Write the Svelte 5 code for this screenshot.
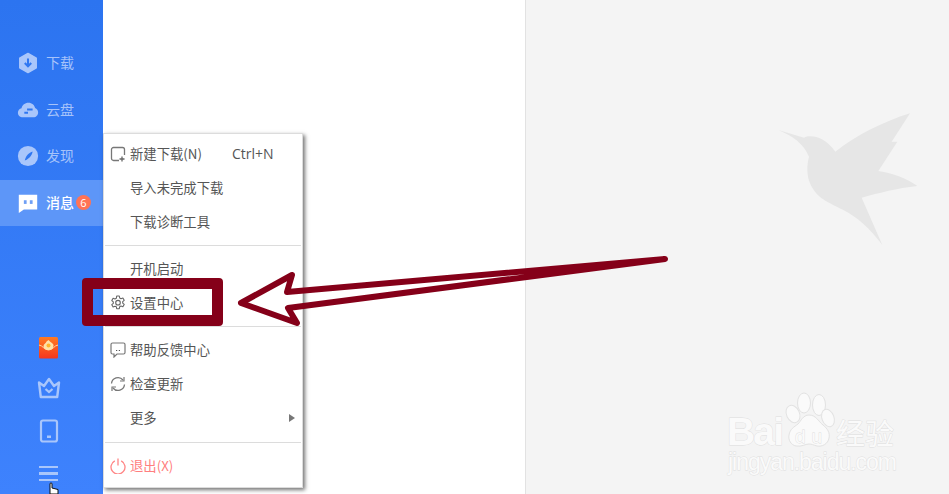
<script>
	const navItems = [
		{ key: 'download', label: '下载' },
		{ key: 'cloud', label: '云盘' },
		{ key: 'discover', label: '发现' },
		{ key: 'message', label: '消息', badge: 6, active: true }
	];

	const menuGroups = [
		[
			{ icon: 'new', label: '新建下载(N)', hint: 'Ctrl+N' },
			{ label: '导入未完成下载' },
			{ label: '下载诊断工具' }
		],
		[{ label: '开机启动' }, { icon: 'gear', label: '设置中心' }],
		[
			{ icon: 'help', label: '帮助反馈中心' },
			{ icon: 'refresh', label: '检查更新' },
			{ label: '更多', more: true }
		],
		[{ icon: 'power', label: '退出(X)', danger: true }]
	];
</script>

<div class="app">
	<aside class="sidebar">
		<nav class="nav">
			{#each navItems as item}
				<div class="nav-item" class:active={item.active}>
					<svg class="nav-icon" viewBox="0 0 24 24" width="24" height="24">
						{#if item.key === 'download'}
							<path d="M12 1.500 21 6.600v10.800l-9 5.100-9-5.100V6.600z" fill="#a9c6fb" stroke="#a9c6fb" stroke-linejoin="round" stroke-width="1.500" />
							<path d="M12 7v8M8.500 12l3.500 3.600 3.500-3.600" fill="none" stroke="#2f77f2" stroke-width="2.200" />
						{:else if item.key === 'cloud'}
							<path d="M6.500 20C3 20 1 17.500 1 15c0-2.500 1.700-4.500 4-5 .8-3.500 3.700-6 7.500-6 3.800 0 6.500 2.500 7.200 5.800 2 .7 3.300 2.700 3.300 5 0 2.800-2.200 5.200-5 5.200z" fill="#a9c6fb" />
							<path d="M11 11.500h6M8 15h4" fill="none" stroke="#2f77f2" stroke-width="2" />
						{:else if item.key === 'discover'}
							<circle cx="12" cy="12" r="11" fill="#a9c6fb" />
							<path d="M17 7c-.5 3.500-2.500 7-8.500 10C9 13.500 11.500 9 17 7z" fill="#2f77f2" />
						{:else}
							<path d="M2 3h20v16H7.500L2 23z" fill="#fff" />
							<rect x="7.500" y="9" width="3" height="4" fill="#6f9ff5" />
							<rect x="14" y="9" width="3" height="4" fill="#6f9ff5" />
						{/if}
					</svg>
					<span class="nav-label">{item.label}</span>
					{#if item.badge}<span class="badge">{item.badge}</span>{/if}
				</div>
			{/each}
		</nav>

		<div class="tools">
			<svg class="packet" viewBox="0 0 20 22" width="20" height="22">
				<defs>
					<linearGradient id="packet" x1="0" y1="0" x2="0" y2="1">
						<stop offset="0" stop-color="#ff7a22" />
						<stop offset="1" stop-color="#f5361f" />
					</linearGradient>
				</defs>
				<rect width="19" height="21.500" rx="1.500" fill="url(#packet)" />
				<path d="M0 8c4 .5 5 5 9.500 5S15 8.500 19 8" fill="none" stroke="#ffd9a0" stroke-width="1" />
				<path d="M4.500 9c0-2 2.500-2.500 3-4.500l2-1.500L11.500 5c1.500 1 3.500 2 3 4-.5 3-2.500 4-5 4s-5-1.500-5-4z" fill="#ffe1a8" />
				<circle cx="9.500" cy="8.500" r="2" fill="#ffb52e" />
			</svg>
			<svg viewBox="0 0 24 22" width="24" height="22">
				<path d="M2 5.500 7 9l5-7 5 7 5-3.500-1.800 14.500H3.800z" fill="none" stroke="#a9c6fb" stroke-width="2.400" stroke-linejoin="round" />
				<path d="M8.500 12l3.500 3 3.500-3" fill="none" stroke="#a9c6fb" stroke-width="2.200" />
			</svg>
			<svg viewBox="0 0 20 24" width="20" height="24">
				<rect x="2" y="1.500" width="16" height="21" rx="2" fill="none" stroke="#a9c6fb" stroke-width="2.200" />
				<rect x="8" y="16.500" width="4" height="2.500" fill="#a9c6fb" />
			</svg>
			<div class="hamburger"><i></i><i></i><i></i></div>
		</div>
	</aside>

	<main class="content"></main>

	<section class="panel">
		<svg class="bird" viewBox="0 0 510 480" width="170" height="160">
			<path d="M55 90 132 113C150 105 190 105 226 155 290 105 370 65 450 40L395 125 412 125 355 213C400 220 440 235 472 258 410 265 360 278 305 293L367 435C330 385 290 350 250 330 200 305 170 295 150 250 140 225 140 195 147 170 130 130 100 110 55 90Z" fill="#e6e6e6" />
		</svg>
		<svg class="mark" viewBox="0 0 229 109" width="229" height="109">
			<g fill="#fafafa" stroke="#e2e2e2" stroke-width="1">
				<ellipse cx="84" cy="18" rx="6.500" ry="10" />
				<ellipse cx="99" cy="20" rx="6.500" ry="10.500" />
				<ellipse cx="73" cy="29" rx="6.500" ry="9" transform="rotate(-25 73 29)" />
				<ellipse cx="108" cy="33" rx="6" ry="9" transform="rotate(-20 108 33)" />
				<path d="M89 30c7 0 9 6 14 10 5 4 7 8 6 13-1 6-7 9-12 8-4-1-5-2-8-2-4 0-7 3-13 2-5-1-8-6-7-11 1-6 5-8 9-11 3-3 5-9 11-9z" />
			</g>
			<g class="mark-text">
				<text x="7" y="60" font-size="39" font-weight="700" textLength="57">Bai</text>
				<text x="75" y="58" font-size="19" textLength="27">du</text>
				<text x="116" y="60" font-size="29" textLength="58">经验</text>
				<text x="8" y="85" font-size="23" textLength="169">jingyan.baidu.com</text>
			</g>
		</svg>
	</section>

	<div class="menu">
		{#each menuGroups as group, g}
			{#if g > 0}<div class="divider"></div>{/if}
			{#each group as item}
				<div class="menu-item" class:danger={item.danger}>
					<span class="menu-icon">
						{#if item.icon === 'new'}
							<svg viewBox="0 0 16 16" width="16" height="16">
								<path d="M9 14.500H3.500a2 2 0 0 1-2-2v-9a2 2 0 0 1 2-2h9a2 2 0 0 1 2 2V9" fill="none" stroke="#777" stroke-width="1.300" />
								<path d="M12 10.500v5M9.500 13h5" fill="none" stroke="#666" stroke-width="1.300" />
							</svg>
						{:else if item.icon === 'gear'}
							<svg viewBox="0 0 16 16" width="16" height="16">
								<path d="M6.700 1h2.600l.4 2 1.300.7 1.900-.7 1.300 2.300-1.500 1.300v1.500l1.500 1.300-1.300 2.300-1.900-.7-1.300.7-.4 2H6.700l-.4-2L5 11.300l-1.900.7-1.300-2.300L3.300 8.400V6.900L1.800 5.600 3.100 3.300l1.900.7 1.300-.7z" fill="none" stroke="#666" stroke-width="1.100" stroke-linejoin="round" />
								<circle cx="8" cy="7.700" r="2.300" fill="none" stroke="#666" stroke-width="1.100" />
							</svg>
						{:else if item.icon === 'help'}
							<svg viewBox="0 0 16 16" width="16" height="16">
								<path d="M2.500 1h11A1.500 1.500 0 0 1 15 2.500v8a1.500 1.500 0 0 1-1.500 1.500H7l-3 3v-3H2.500A1.500 1.500 0 0 1 1 10.500v-8A1.500 1.500 0 0 1 2.500 1z" fill="none" stroke="#777" stroke-width="1.200" />
								<path d="M6 8.500h1.200M8.800 8.500H10" stroke="#555" stroke-width="1.200" />
							</svg>
						{:else if item.icon === 'refresh'}
							<svg viewBox="0 0 16 16" width="16" height="16">
								<path d="M1.500 7.500A6.500 6.500 0 0 1 13 4" fill="none" stroke="#777" stroke-width="1.300" />
								<path d="M14.500 8.500A6.500 6.500 0 0 1 3 12" fill="none" stroke="#777" stroke-width="1.300" />
								<path d="M14 1v4h-4M2 15v-4h4" fill="none" stroke="#777" stroke-width="1.200" />
							</svg>
						{:else if item.icon === 'power'}
							<svg viewBox="0 0 16 16" width="16" height="16">
								<path d="M4.800 2.800a7 7 0 1 0 6.400 0" fill="none" stroke="#ff8585" stroke-width="1.300" />
								<path d="M8 .5v7" stroke="#ff8585" stroke-width="1.300" />
							</svg>
						{/if}
					</span>
					<span class="menu-label">{item.label}</span>
					{#if item.hint}<span class="menu-hint">{item.hint}</span>{/if}
					{#if item.more}<span class="caret"></span>{/if}
				</div>
			{/each}
		{/each}
	</div>

	<!-- hand annotation drawn over the screenshot -->
	<div class="highlight"></div>
	<svg class="arrow" viewBox="0 0 949 494" width="949" height="494">
		<path d="M665 259 287 292 292 275 241 303 297 323 288 308Z" fill="none" stroke="#850019" stroke-width="6" stroke-linejoin="round" />
	</svg>
	<svg class="cursor" viewBox="0 0 14 12" width="14" height="12">
		<path d="M3 12V2c0-1.500 2-1.500 2 0v4l6 1.500V12z" fill="#fff" stroke="#111" stroke-width="1" />
	</svg>
</div>

<style>
	:global(body) {
		margin: 0;
	}

	.app {
		position: relative;
		display: flex;
		width: 949px;
		height: 494px;
		overflow: hidden;
		background: #fff;
		font-family: 'Noto Sans CJK SC', 'Liberation Sans', sans-serif;
		font-size: 13.330px;
	}

	.sidebar {
		display: flex;
		flex-direction: column;
		width: 103px;
		flex: none;
		background: linear-gradient(180deg, #2c74f0 0%, #3e82fd 100%);
	}

	.nav {
		padding-top: 40px;
	}

	.nav-item {
		display: flex;
		align-items: center;
		height: 46.500px;
		padding-left: 16px;
		color: #a6c3fa;
		font-size: 14px;
	}

	.nav-item.active {
		background: #5d96f8;
		color: #fff;
		font-weight: 500;
	}

	.nav-icon {
		width: 24px;
		height: 24px;
		flex: none;
		transform: scale(0.92);
	}

	.nav-label {
		margin-left: 6px;
		padding-bottom: 2px;
		line-height: 1;
	}

	.badge {
		display: flex;
		align-items: center;
		justify-content: center;
		width: 15px;
		height: 15px;
		margin-left: 2px;
		border-radius: 50%;
		background: #ff7355;
		color: #fff;
		font-family: 'Open Sans', sans-serif;
		font-size: 11px;
		font-weight: 400;
	}

	.tools {
		display: flex;
		flex-direction: column;
		align-items: center;
		gap: 20px;
		margin-top: auto;
		padding: 0 6px 13px 0;
	}

	.packet {
		margin-bottom: -2px;
	}

	.hamburger {
		display: flex;
		flex-direction: column;
		gap: 4px;
		width: 19px;
		margin-top: 3px;
	}

	.hamburger i {
		height: 2.500px;
		background: #a9c6fb;
	}

	.content {
		width: 422px;
		flex: none;
		border-right: 1px solid #e2e2e2;
	}

	.panel {
		flex: 1;
		padding-top: 100px;
		background: #f4f4f4;
	}

	.bird {
		display: block;
		margin-left: 234px;
	}

	.mark {
		display: block;
		margin: 125px 0 0 194px;
	}

	.mark-text text {
		font-family: 'Liberation Sans', 'Noto Sans CJK SC', sans-serif;
		fill: #fafafa;
		stroke: #dedede;
		stroke-width: 0.800;
		paint-order: stroke;
	}

	.menu {
		position: absolute;
		left: 103px;
		top: 133px;
		width: 200px;
		height: 355px;
		box-sizing: border-box;
		padding: 3px 0 5px;
		background: #fff;
		border: 1px solid #dcdcdc;
		box-shadow: 2px 2px 4px rgba(0, 0, 0, 0.55);
		color: #555;
	}

	.menu-item {
		display: flex;
		align-items: center;
		height: 34px;
		padding-left: 6px;
	}

	.menu-item.danger {
		color: #ff7f7f;
	}

	.menu-icon {
		display: flex;
		width: 20px;
		flex: none;
	}

	.menu-label {
		line-height: 1;
	}

	.menu-hint {
		margin-left: 30px;
		font-family: 'Open Sans', sans-serif;
		font-size: 14px;
		line-height: 1;
	}

	.caret {
		margin-left: auto;
		margin-right: 7px;
		border-left: 6px solid #777;
		border-top: 4.500px solid transparent;
		border-bottom: 4.500px solid transparent;
	}

	.divider {
		height: 1px;
		margin: 6px 1px;
		background: #dcdcdc;
	}

	.divider:nth-last-child(2) {
		margin-top: 7px;
	}

	.highlight {
		position: absolute;
		left: 82px;
		top: 278px;
		width: 141px;
		height: 48px;
		box-sizing: border-box;
		border: 11px solid #850019;
		border-radius: 4px;
	}

	.arrow {
		position: absolute;
		left: 0;
		top: 0;
	}

	.cursor {
		position: absolute;
		left: 47px;
		top: 482px;
	}
</style>
